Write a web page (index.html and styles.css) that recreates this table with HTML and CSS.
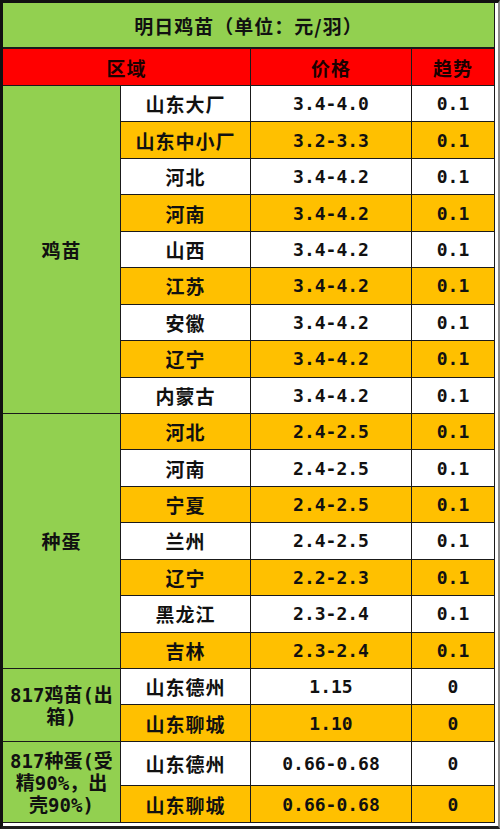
FILE: index.html
```html
<!DOCTYPE html>
<html lang="zh">
<head>
<meta charset="utf-8">
<title>明日鸡苗</title>
<link rel="stylesheet" href="styles.css">
</head>
<body>
<div class="frame">
  <div class="sheet">
    <div class="cell title cjk">明日鸡苗（单位：元/羽）</div>
    <div class="cell head span2 cjk">区域</div>
    <div class="cell head cjk">价格</div>
    <div class="cell head cjk">趋势</div>

    <div class="cell group g9 cjk">鸡苗</div>
    <div class="cell w cjk">山东大厂</div><div class="cell w num">3.4-4.0</div><div class="cell w num">0.1</div>
    <div class="cell o cjk">山东中小厂</div><div class="cell o num">3.2-3.3</div><div class="cell o num">0.1</div>
    <div class="cell w cjk">河北</div><div class="cell w num">3.4-4.2</div><div class="cell w num">0.1</div>
    <div class="cell o cjk">河南</div><div class="cell o num">3.4-4.2</div><div class="cell o num">0.1</div>
    <div class="cell w cjk">山西</div><div class="cell w num">3.4-4.2</div><div class="cell w num">0.1</div>
    <div class="cell o cjk">江苏</div><div class="cell o num">3.4-4.2</div><div class="cell o num">0.1</div>
    <div class="cell w cjk">安徽</div><div class="cell w num">3.4-4.2</div><div class="cell w num">0.1</div>
    <div class="cell o cjk">辽宁</div><div class="cell o num">3.4-4.2</div><div class="cell o num">0.1</div>
    <div class="cell w cjk">内蒙古</div><div class="cell w num">3.4-4.2</div><div class="cell w num">0.1</div>

    <div class="cell group g7 cjk">种蛋</div>
    <div class="cell o cjk">河北</div><div class="cell o num">2.4-2.5</div><div class="cell o num">0.1</div>
    <div class="cell w cjk">河南</div><div class="cell w num">2.4-2.5</div><div class="cell w num">0.1</div>
    <div class="cell o cjk">宁夏</div><div class="cell o num">2.4-2.5</div><div class="cell o num">0.1</div>
    <div class="cell w cjk">兰州</div><div class="cell w num">2.4-2.5</div><div class="cell w num">0.1</div>
    <div class="cell o cjk">辽宁</div><div class="cell o num">2.2-2.3</div><div class="cell o num">0.1</div>
    <div class="cell w cjk">黑龙江</div><div class="cell w num">2.3-2.4</div><div class="cell w num">0.1</div>
    <div class="cell o cjk">吉林</div><div class="cell o num">2.3-2.4</div><div class="cell o num">0.1</div>

    <div class="cell group g2 multi">817鸡苗(出<br>箱)</div>
    <div class="cell w cjk">山东德州</div><div class="cell w num">1.15</div><div class="cell w num">0</div>
    <div class="cell o cjk">山东聊城</div><div class="cell o num">1.10</div><div class="cell o num">0</div>

    <div class="cell group g2 multi">817种蛋(受<br>精90%，出<br>壳90%)</div>
    <div class="cell w cjk">山东德州</div><div class="cell w num">0.66-0.68</div><div class="cell w num">0</div>
    <div class="cell o cjk">山东聊城</div><div class="cell o num">0.66-0.68</div><div class="cell o num">0</div>
  </div>
</div>
</body>
</html>
```

FILE: styles.css
```css
html, body {
  margin: 0;
  padding: 0;
  background: #ffffff;
}

.frame {
  width: 500px;
  height: 829px;
  box-sizing: border-box;
  border-top: 3px solid #111111;
  border-left: 3px solid #111111;
  border-right: 2px solid #8a8a8a;
  border-bottom: 3px solid #1e1e1e;
  padding-right: 3px;
  padding-bottom: 3px;
  background: #ffffff;
}

.sheet {
  display: grid;
  grid-template-columns: 117px 129px 160px 82px;
  grid-template-rows: 45px 36px repeat(16, 35.44px) 35px 36px 43px 36px;
  gap: 1px;
  padding: 0 1px 1px 0;
  background: #1a1a1a;
  width: 492px;
  box-sizing: border-box;
}

.cell {
  display: flex;
  align-items: center;
  justify-content: center;
  text-align: center;
  color: #111111;
  font-family: "Noto Sans CJK SC", "Noto Sans", sans-serif;
  font-weight: 700;
}

.cjk {
  font-size: 19px;
  letter-spacing: 1px;
}

.num {
  font-family: "DejaVu Sans Mono", "Noto Sans CJK SC", monospace;
  font-size: 18px;
}

.title {
  grid-column: span 4;
  background: #92d050;
  border-bottom: 1px solid #1a1a1a;
}

.head {
  background: #ff0000;
  color: #1c0000;
}

.span2 {
  grid-column: span 2;
}

.group {
  background: #92d050;
}

.g9 { grid-row: span 9; }
.g7 { grid-row: span 7; }
.g2 { grid-row: span 2; }

.multi {
  font-family: "DejaVu Sans Mono", "Noto Sans CJK SC", monospace;
  font-size: 19px;
  line-height: 22px;
  padding-top: 2px;
  box-sizing: border-box;
}

.w { background: #ffffff; }
.o { background: #ffc000; }
```
